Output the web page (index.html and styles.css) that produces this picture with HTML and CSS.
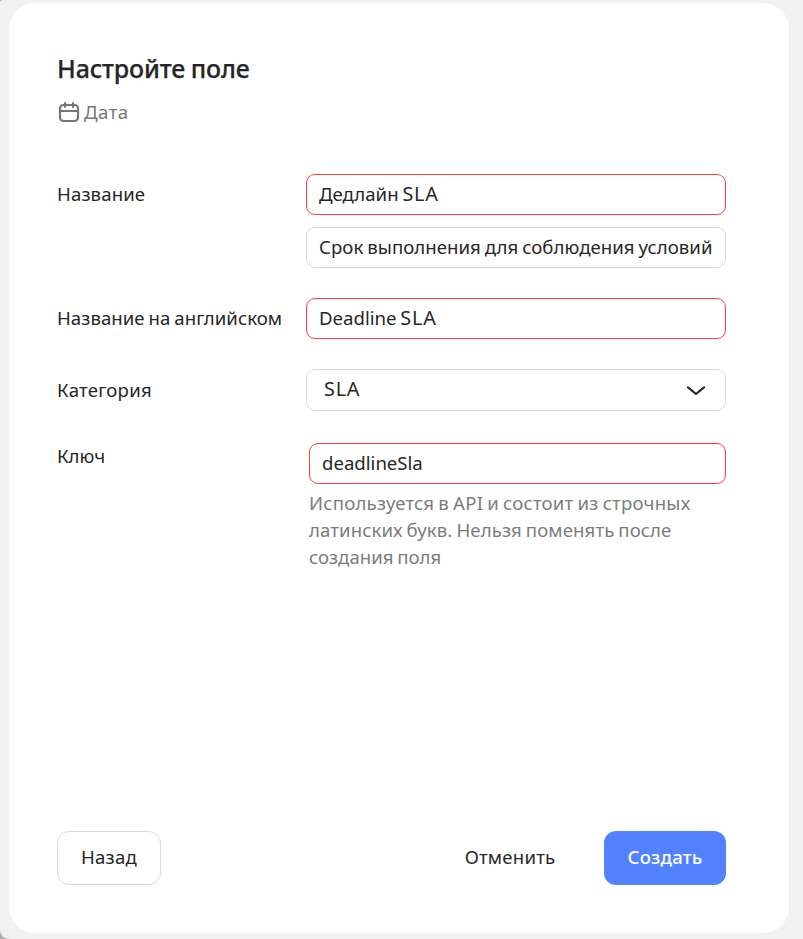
FILE: index.html
```html
<!DOCTYPE html>
<html lang="ru">
<head>
<meta charset="utf-8">
<title>Настройте поле</title>
<link rel="stylesheet" href="styles.css">
</head>
<body>
<main class="shell">
  <form class="card">
    <h1 class="title"><span>Настройте поле</span></h1>
    <div class="type">
      <svg class="type-icon" width="22" height="22" viewBox="0 0 22 22" fill="none" stroke="currentColor" stroke-width="2.2" stroke-linecap="round"><rect x="2" y="4" width="18" height="16" rx="3.5"/><path d="M2 10H20M7 2V6M15 2V6"/></svg>
      <span class="t-type">Дата</span>
    </div>
    <div class="row row-name">
      <label class="label"><span class="t-name">Название</span></label>
      <div class="fields">
        <div class="input invalid"><span>Дедлайн <span class="sla">SLA</span></span></div>
        <div class="input"><span class="t-description">Срок выполнения для соблюдения условий</span></div>
      </div>
    </div>
    <div class="row row-english">
      <label class="label"><span class="t-english">Название на английском</span></label>
      <div class="fields"><div class="input invalid"><span>Deadline <span class="sla">SLA</span></span></div></div>
    </div>
    <div class="row row-category">
      <label class="label"><span class="t-category">Категория</span></label>
      <div class="fields">
        <div class="input select"><span class="sla">SLA</span>
          <svg class="chevron" width="20" height="12" viewBox="0 0 20 12" fill="none" stroke="currentColor" stroke-width="2.2" stroke-linecap="round" stroke-linejoin="round"><path d="M2 2.3L10 9L18 2.3"/></svg>
        </div>
      </div>
    </div>
    <div class="row row-key">
      <label class="label"><span class="t-key">Ключ</span></label>
      <div class="fields">
        <div class="input invalid"><span class="t-key-value">deadlineSla</span></div>
        <p class="hint"><span class="hint-1">Используется в API и состоит из строчных</span><br><span class="hint-2">латинских букв. Нельзя поменять после</span><br><span class="hint-3">создания поля</span></p>
      </div>
    </div>
    <footer class="actions">
      <button type="button" class="button back"><span class="t-back">Назад</span></button>
      <button type="button" class="button cancel"><span class="t-cancel">Отменить</span></button>
      <button type="button" class="button create"><span class="t-create">Создать</span></button>
    </footer>
  </form>
</main>
</body>
</html>
```

FILE: styles.css
```css
* { box-sizing: border-box; }
body { margin: 0; background: #b0b0b0; }
.shell {
  height: 939px;
  padding: 3px 14px 6px 9px;
  overflow: hidden;
  background: #f1f1f1;
  border-radius: 3px 0 0 9px;
}
.card {
  display: flex;
  flex-direction: column;
  height: 930px;
  padding: 47px 63px 48px 48px;
  border-radius: 26px;
  background: #fff;
  color: #262626;
  font: 18.6px/26px "Noto Sans", sans-serif;
  word-spacing: -1px;
}
.card span { white-space: nowrap; }
.title { margin: 0; font-size: 25px; line-height: 36px; font-weight: 500; word-spacing: -0.8px; letter-spacing: -0.15px; -webkit-text-stroke: 0.25px currentColor; }
.type { display: flex; align-items: center; gap: 4px; height: 26px; margin-top: 13px; color: #777; }
.type-icon { margin-left: 1px; flex: none; }
.t-type { letter-spacing: 0.5px; }
.row { display: grid; grid-template-columns: 249px 420px; }
.label { height: 41px; padding-top: 7px; }
.row-name { margin-top: 49px; }
.row-english { margin-top: 30px; }
.row-category { margin-top: 30px; }
.row-key { margin-top: 32px; }
.fields { display: flex; flex-direction: column; gap: 12px; min-width: 0; }
.input {
  display: flex;
  align-items: center;
  height: 41px;
  padding: 0 12px 2px;
  border: 1px solid #d9d9d9;
  border-radius: 9px;
}
.invalid { border-color: #ff3d3d; }
.sla { font-size: 19.8px; letter-spacing: 0.8px; }
.select { height: 42px; padding: 0 19px 2px 17px; justify-content: space-between; }
.chevron { margin-top: 3px; }
.t-name { letter-spacing: 0.12px; }
.t-description, .t-english { letter-spacing: 0.05px; }
.t-category { letter-spacing: 0.22px; }
.row-category .label { padding-top: 8px; }
.row-key .label { padding-top: 0; }
.row-key .fields { margin-left: 3px; gap: 5px; }
.hint { margin: 0; color: #7c7c7c; line-height: 27px; }
.hint-1 { letter-spacing: 0.22px; }
.hint-2 { letter-spacing: 0.1px; }
.actions { display: flex; align-items: center; margin-top: auto; }
.button {
  height: 54px;
  padding: 0 0 2px;
  border: 0;
  border-radius: 12px;
  background: none;
  color: inherit;
  font: inherit;
  letter-spacing: 0.2px;
}
.back { width: 104px; border: 1px solid #d9d9d9; }
.cancel { width: 138px; margin-left: auto; }
.create { width: 122px; margin-left: 25px; background: #5282ff; color: #fff; font-weight: 500; }
```
